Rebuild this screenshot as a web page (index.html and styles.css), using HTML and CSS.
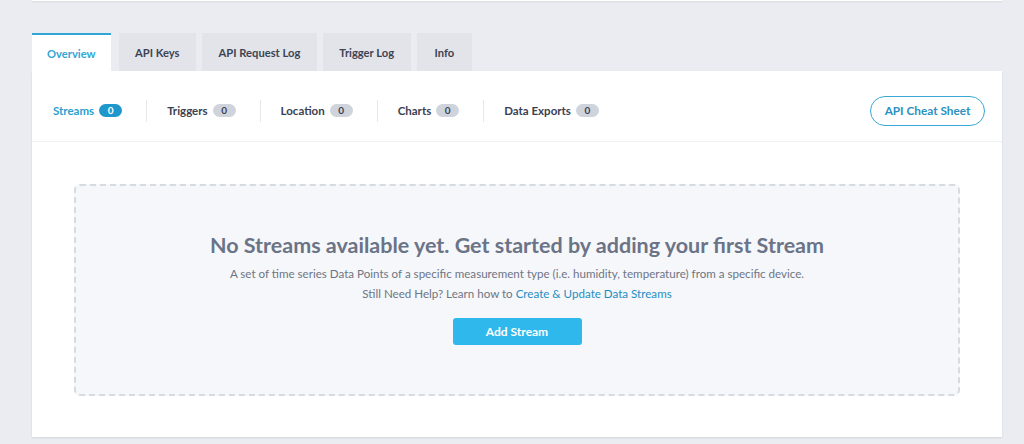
FILE: index.html
```html
<!DOCTYPE html>
<html>
<head>
<meta charset="utf-8">
<link rel="stylesheet" href="styles.css">
</head>
<body>
<div class="page">
  <div class="top-card"></div>
  <div class="tabs">
    <div class="tab active">Overview</div>
    <div class="tab">API Keys</div>
    <div class="tab">API Request Log</div>
    <div class="tab">Trigger Log</div>
    <div class="tab">Info</div>
  </div>
  <div class="card">
    <div class="nav">
      <div class="nav-items">
        <div class="nav-item active">Streams <span class="badge">0</span></div>
        <div class="nav-item">Triggers <span class="badge">0</span></div>
        <div class="nav-item">Location <span class="badge">0</span></div>
        <div class="nav-item">Charts <span class="badge">0</span></div>
        <div class="nav-item">Data Exports <span class="badge">0</span></div>
      </div>
      <button class="cheat">API Cheat Sheet</button>
    </div>
    <div class="body">
      <div class="empty">
        <h2 class="empty-title">No Streams available yet. Get started by adding your first Stream</h2>
        <p class="empty-text">A set of time series Data Points of a specific measurement type (i.e. humidity, temperature) from a specific device.</p>
        <p class="empty-text">Still Need Help? Learn how to <a class="link">Create &amp; Update Data Streams</a></p>
        <button class="add">Add Stream</button>
      </div>
    </div>
  </div>
</div>
</body>
</html>
```
FILE: styles.css
```css
html, body {
  margin: 0;
  padding: 0;
}
body {
  background: #ebecf1;
  font-family: Lato, "Open Sans", sans-serif;
  color: #3b4151;
  height: 444px;
  overflow: hidden;
}
.page {
  width: 970px;
  margin-left: 32px;
}
.top-card {
  height: 1px;
  background: #ffffff;
  box-shadow: 0 1px 2px rgba(0,0,0,0.12);
}
.tabs {
  display: flex;
  gap: 6px;
  margin-top: 32px;
  height: 38px;
}
.tab {
  display: flex;
  align-items: center;
  padding: 0 16.5px;
  background: #e2e4ea;
  font-size: 11.2px;
  font-weight: 700;
  color: #3d4352;
  box-sizing: border-box;
}
.tab:last-child {
  padding: 0 18px;
}
.tab.active {
  background: #ffffff;
  color: #2fa6d6;
  border-top: 2px solid #2fa6d6;
  margin-right: 2px;
  padding: 0 15px;
}
.card {
  background: #ffffff;
  height: 366px;
  box-shadow: 0 1px 2px rgba(0,0,0,0.10);
  display: flex;
  flex-direction: column;
}
.nav {
  height: 71px;
  box-sizing: border-box;
  border-bottom: 1px solid #f0f1f4;
  display: flex;
  align-items: center;
  justify-content: space-between;
  padding: 9px 17px 0 21px;
}
.nav-items {
  display: flex;
  align-items: center;
}
.nav-item {
  display: flex;
  align-items: center;
  gap: 5px;
  height: 22px;
  padding: 0 24px 0 20px;
  border-right: 1px solid #e6e8ec;
  font-size: 11.5px;
  font-weight: 700;
  color: #3b4151;
}
.nav-item:first-child {
  padding-left: 0;
}
.nav-item:last-child {
  border-right: none;
}
.nav-item.active {
  color: #2a9fd0;
}
.badge {
  display: inline-block;
  min-width: 23px;
  height: 13px;
  line-height: 13px;
  border-radius: 7px;
  background: #cfd3dc;
  color: #3b4151;
  font-size: 10px;
  font-weight: 700;
  text-align: center;
}
.nav-item.active .badge {
  background: #1e97cd;
  color: #ffffff;
}
.cheat {
  height: 30px;
  width: 115px;
  border: 1px solid #3aa7d6;
  border-radius: 15px;
  background: #ffffff;
  color: #2a91c2;
  font-family: inherit;
  font-size: 11.8px;
  font-weight: 700;
  padding: 0;
}
.body {
  flex: 1;
  padding: 42px 42px 41px 42px;
  display: flex;
}
.empty {
  flex: 1;
  background: #f5f7fa;
  border: 2px dashed #d6dae1;
  border-radius: 6px;
  display: flex;
  flex-direction: column;
  align-items: center;
  justify-content: center;
  padding-bottom: 3px;
}
.empty-title {
  margin: 0 0 6px 0;
  font-size: 21.5px;
  line-height: 26px;
  font-weight: 700;
  color: #6b7387;
}
.empty-text {
  margin: 0;
  font-size: 11.6px;
  line-height: 20px;
  color: #6e7585;
}
.link {
  color: #1f8ec2;
  text-decoration: none;
}
.add {
  margin-top: 14px;
  width: 129px;
  height: 27px;
  border: none;
  border-radius: 3px;
  background: #2fb8ec;
  color: #ffffff;
  font-family: inherit;
  font-size: 12px;
  font-weight: 700;
}
```
